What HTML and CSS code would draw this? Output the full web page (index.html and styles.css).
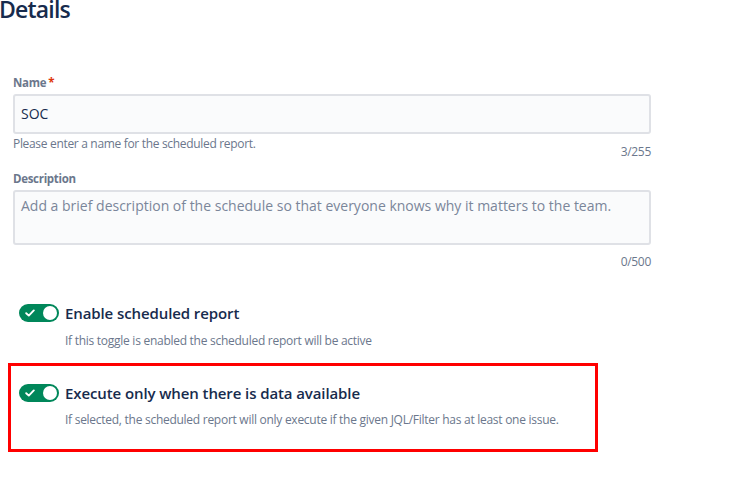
FILE: index.html
```html
<!DOCTYPE html>
<html lang="en">
<head>
<meta charset="utf-8">
<title>Details</title>
<link rel="stylesheet" href="styles.css">
</head>
<body>
<div class="page">
  <h1 class="title">Details</h1>

  <div class="field field-name">
    <label class="label">Name<span class="req">*</span></label>
    <div class="input">SOC</div>
    <div class="helper">Please enter a name for the scheduled report.</div>
    <div class="counter counter-name">3/255</div>
  </div>

  <div class="field field-desc">
    <label class="label">Description</label>
    <div class="textarea">Add a brief description of the schedule so that everyone knows why it matters to the team.</div>
    <div class="counter counter-desc">0/500</div>
  </div>

  <div class="option option-plain">
    <div class="option-row">
      <span class="toggle"><svg class="check" viewBox="0 0 10 8" width="10" height="8"><path d="M1.2 4.2 L3.8 6.6 L8.8 1.4" fill="none" stroke="#fff" stroke-width="1.9" stroke-linecap="round" stroke-linejoin="round"/></svg><span class="knob"></span></span>
      <span class="option-title">Enable scheduled report</span>
    </div>
    <div class="option-desc">If this toggle is enabled the scheduled report will be active</div>
  </div>

  <div class="option option-marked">
    <div class="option-row">
      <span class="toggle"><svg class="check" viewBox="0 0 10 8" width="10" height="8"><path d="M1.2 4.2 L3.8 6.6 L8.8 1.4" fill="none" stroke="#fff" stroke-width="1.9" stroke-linecap="round" stroke-linejoin="round"/></svg><span class="knob"></span></span>
      <span class="option-title">Execute only when there is data available</span>
    </div>
    <div class="option-desc">If selected, the scheduled report will only execute if the given JQL/Filter has at least one issue.</div>
  </div>
</div>
</body>
</html>
```

FILE: styles.css
```css
html, body {
  margin: 0;
  padding: 0;
  background: #ffffff;
}

body {
  font-family: "Open Sans", "Noto Sans", sans-serif;
  color: #172B4D;
}

.page {
  width: 651px;
  padding-left: 13px;
  box-sizing: border-box;
}

.title {
  margin: -5px 0 0 -14px;
  font-size: 23px;
  line-height: 28px;
  font-weight: 600;
  color: #172B4D;
  letter-spacing: -0.8px;
}

.field-name {
  margin-top: 52px;
}

.label {
  display: block;
  font-size: 11.5px;
  line-height: 16px;
  font-weight: 700;
  color: #6B778C;
  letter-spacing: -0.3px;
}

.req {
  color: #DE350B;
  margin-left: 2px;
}

.input {
  margin-top: 3px;
  height: 40px;
  box-sizing: border-box;
  border: 2px solid #DFE1E6;
  border-radius: 3px;
  background: #FAFBFC;
  padding: 0 6px;
  font-size: 14px;
  line-height: 36px;
  color: #172B4D;
}

.helper {
  margin-top: 3px;
  font-size: 12px;
  line-height: 14px;
  color: #6B778C;
  letter-spacing: -0.32px;
}

.counter {
  text-align: right;
  font-size: 12px;
  line-height: 14px;
  color: #6B778C;
  letter-spacing: -0.3px;
}

.counter-name {
  margin-top: -6px;
}

.field-desc {
  margin-top: 12px;
}

.textarea {
  margin-top: 3px;
  height: 55px;
  box-sizing: border-box;
  border: 2px solid #DFE1E6;
  border-radius: 3px;
  background: #FAFBFC;
  padding: 4px 6px;
  font-size: 14px;
  line-height: 20px;
  color: #7A869A;
}

.counter-desc {
  margin-top: 10px;
}

.option {
  box-sizing: border-box;
}

.option-plain {
  margin-top: 34px;
  padding-left: 6px;
}

.option-plain .option-desc {
  margin-top: 11px;
}

.option-marked {
  margin: 15px 0 0 -5px;
  width: 590px;
  height: 89px;
  border: 3px solid #FF0000;
  padding: 17px 0 0 8px;
}

.option-marked .option-desc {
  margin-top: 10px;
}

.option-row {
  display: flex;
  align-items: center;
  gap: 6px;
}

.toggle {
  position: relative;
  display: inline-flex;
  align-items: center;
  width: 40px;
  height: 18px;
  border-radius: 9px;
  background: #00875A;
  flex: none;
}

.check {
  margin-left: 6px;
}

.knob {
  position: absolute;
  right: 2px;
  top: 2px;
  width: 14px;
  height: 14px;
  border-radius: 50%;
  background: #ffffff;
}

.option-title {
  font-size: 15px;
  line-height: 20px;
  font-weight: 600;
  color: #172B4D;
  letter-spacing: -0.1px;
}

.option-desc {
  padding-left: 46px;
  font-size: 12px;
  line-height: 14px;
  color: #6B778C;
  letter-spacing: -0.27px;
}
```
